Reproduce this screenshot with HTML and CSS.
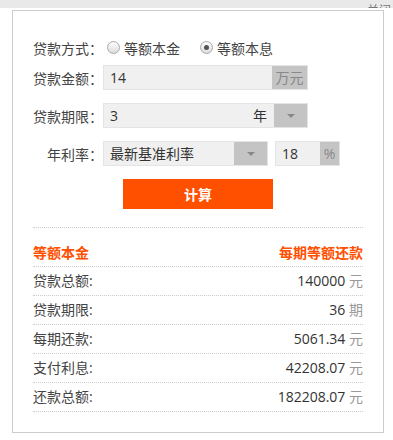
FILE: index.html
```html
<!DOCTYPE html>
<html lang="zh-CN">
<head>
  <meta charset="UTF-8">
  <meta name="viewport" content="width=device-width, initial-scale=1.0">
  <title>房贷计算器</title>
  <link rel="stylesheet" href="styles.css">
</head>
<body>
  <div class="topbar"><span class="topbar-link">关闭</span></div>

  <div class="calc">
    <div class="form">
      <div class="row row-radio">
        <span class="label">贷款方式：</span>
        <label class="radio"><span class="radio-dot"></span>等额本金</label>
        <label class="radio checked"><span class="radio-dot"></span>等额本息</label>
      </div>
      <div class="row">
        <span class="label">贷款金额：</span>
        <div class="field field-amount">
          <span class="field-value">14</span>
          <span class="addon addon-wide">万元</span>
        </div>
      </div>
      <div class="row">
        <span class="label">贷款期限：</span>
        <div class="field field-term">
          <span class="field-value">3</span>
          <span class="field-unit">年</span>
          <span class="addon arrow"></span>
        </div>
      </div>
      <div class="row">
        <span class="label">年利率：</span>
        <div class="field field-rate-type">
          <span class="field-value">最新基准利率</span>
          <span class="addon arrow"></span>
        </div>
        <div class="field field-rate">
          <span class="field-value">18</span>
          <span class="addon addon-small">%</span>
        </div>
      </div>
      <button class="calc-btn">计算</button>
    </div>

    <ul class="result">
      <li class="result-head"><span>等额本金</span><span>每期等额还款</span></li>
      <li><span class="result-name">贷款总额:</span><span class="result-num">140000 <em>元</em></span></li>
      <li><span class="result-name">贷款期限:</span><span class="result-num">36 <em>期</em></span></li>
      <li><span class="result-name">每期还款:</span><span class="result-num">5061.34 <em>元</em></span></li>
      <li><span class="result-name">支付利息:</span><span class="result-num">42208.07 <em>元</em></span></li>
      <li><span class="result-name">还款总额:</span><span class="result-num">182208.07 <em>元</em></span></li>
    </ul>
  </div>
</body>
</html>
```

FILE: styles.css
```css
body {
  margin: 0;
  padding: 0;
  background: #fff;
  color: #444;
  font-family: "Open Sans", "Noto Sans CJK SC", sans-serif;
  font-size: 14px;
}

.topbar {
  height: 8px;
  background: #e9e9e9;
  overflow: hidden;
  text-align: right;
}

.topbar-link {
  display: inline-block;
  margin-top: -11px;
  margin-right: 2px;
  font-size: 12px;
  line-height: 14px;
  color: #777;
}

.calc {
  width: 372px;
  box-sizing: border-box;
  margin: 2px 0 0 12px;
  padding: 24px 20px 20px;
  border: 1px solid #ccc;
}

.row {
  display: flex;
  align-items: center;
  height: 25px;
  margin-bottom: 13px;
}

.row-radio {
  margin-bottom: 5px;
}

.label {
  width: 70px;
  flex-shrink: 0;
  text-align: right;
  white-space: nowrap;
}

.radio {
  display: flex;
  align-items: center;
  margin-left: 4px;
  margin-right: 16px;
  cursor: pointer;
}

.radio-dot {
  width: 11px;
  height: 11px;
  margin-right: 4px;
  border: 1px solid #a9a9a9;
  border-radius: 50%;
  background: linear-gradient(#fdfdfd, #dcdcdc);
  position: relative;
}

.radio.checked .radio-dot::after {
  content: "";
  position: absolute;
  left: 3px;
  top: 3px;
  width: 5px;
  height: 5px;
  border-radius: 50%;
  background: #555;
}

.field {
  display: flex;
  align-items: stretch;
  height: 25px;
  box-sizing: border-box;
  border: 1px solid #e4e4e4;
  background: #f0f0f0;
  color: #333;
}

.field-value {
  flex: 1;
  padding-left: 6px;
  line-height: 23px;
  white-space: nowrap;
}

.field-unit {
  line-height: 23px;
  margin-right: 7px;
}

.field-amount,
.field-term {
  width: 205px;
}

.field-rate-type {
  width: 165px;
}

.field-rate {
  width: 65px;
  margin-left: 7px;
}

.addon {
  width: 33px;
  background: #c4c4c4;
  color: #888;
  text-align: center;
  line-height: 23px;
}

.addon-wide {
  width: 35px;
}

.addon-small {
  width: 19px;
}

.arrow {
  position: relative;
}

.arrow::after {
  content: "";
  position: absolute;
  left: 50%;
  top: 10px;
  margin-left: -4px;
  border-left: 4px solid transparent;
  border-right: 4px solid transparent;
  border-top: 4px solid #888;
}

.calc-btn {
  display: block;
  width: 150px;
  height: 30px;
  margin: 0 auto;
  padding: 0;
  border: none;
  background: #ff5000;
  color: #fff;
  font-family: inherit;
  font-size: 14px;
  font-weight: bold;
  cursor: pointer;
}

.result {
  list-style: none;
  margin: 18px 0 0;
  padding: 0;
  border-top: 1px dotted #ccc;
}

.result li {
  display: flex;
  justify-content: space-between;
  height: 28px;
  line-height: 28px;
  border-bottom: 1px dotted #ccc;
}

.result .result-head {
  height: 24px;
  padding-top: 14px;
  line-height: 22px;
  color: #ff5000;
  font-weight: bold;
}

.result-name {
  color: #444;
}

.result-num {
  color: #333;
}

.result-num em {
  font-style: normal;
  color: #999;
}
```
